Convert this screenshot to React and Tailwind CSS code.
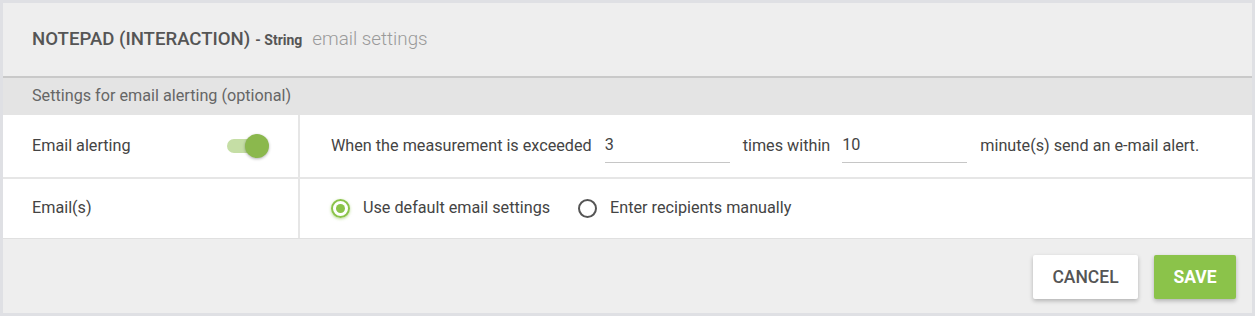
import React from "react";

export default function App() {
  return (
    <div
      className="w-[1255px] h-[316px] bg-[#dfe0e4] p-[3px]"
      style={{ fontFamily: "Roboto, 'Liberation Sans', sans-serif" }}
    >
      <div className="h-full bg-[#eeeeee] flex flex-col">
        {/* Header */}
        <div className="h-[75px] flex items-center pl-[29px] border-b-2 border-[#c9c9c9] shrink-0">
          <span className="text-[18.6px] font-medium text-[#555555]">NOTEPAD (INTERACTION)</span>
          <span className="text-[14px] font-bold text-[#555555] ml-[5px] mt-[2px]">- String</span>
          <span className="text-[18.8px] font-light text-[#9a9a9a] ml-[10px]">email settings</span>
        </div>
        {/* Section header */}
        <div className="h-[37px] flex items-center pl-[29px] bg-[#e4e4e4] shrink-0">
          <span className="text-[16.2px] text-[#666666]">Settings for email alerting (optional)</span>
        </div>
        {/* Rows */}
        <div className="bg-white shrink-0">
          <div className="flex h-[64px] border-b-2 border-[#e6e6e6]">
            <div className="w-[297px] flex items-center justify-between pl-[29px] pr-[33px] border-r-2 border-[#e6e6e6]">
              <span className="text-[16.2px] text-[#444444]">Email alerting</span>
              <div className="relative w-[38px] h-[14px] rounded-full bg-[#c5dea5]">
                <div className="absolute right-[-4px] top-[-5px] w-[24px] h-[24px] rounded-full bg-[#8bb84d] shadow-[0_1px_3px_rgba(0,0,0,0.3)]" />
              </div>
            </div>
            <div className="flex-1 flex items-center pl-[31px] text-[16.2px] text-[#444444]">
              <span>When the measurement is exceeded</span>
              <div className="ml-[13px] w-[125px] h-[34px] border-b border-[#c6c6c6] flex items-center">
                <span>3</span>
              </div>
              <span className="ml-[13px]">times within</span>
              <div className="ml-[12px] w-[125px] h-[34px] border-b border-[#c6c6c6] flex items-center">
                <span>10</span>
              </div>
              <span className="ml-[13px]">minute(s) send an e-mail alert.</span>
            </div>
          </div>
          <div className="flex h-[60px] border-b border-[#e0e0e0]">
            <div className="w-[297px] flex items-center pl-[29px] border-r-2 border-[#e6e6e6]">
              <span className="text-[16.2px] text-[#444444]">Email(s)</span>
            </div>
            <div className="flex-1 flex items-center pl-[31px] text-[16.2px] text-[#444444]">
              <div className="w-[19px] h-[19px] rounded-full border-2 border-[#8bc34a] flex items-center justify-center shadow-[0_1px_3px_rgba(139,195,74,0.6)]">
                <div className="w-[9px] h-[9px] rounded-full bg-[#8bc34a]" />
              </div>
              <span className="ml-[13px]">Use default email settings</span>
              <div className="ml-[28px] w-[19px] h-[19px] rounded-full border-2 border-[#555555]" />
              <span className="ml-[13px]">Enter recipients manually</span>
            </div>
          </div>
        </div>
        {/* Footer */}
        <div className="flex-1 flex items-start justify-end pt-[16px] pr-[16px] gap-[16px]">
          <button className="h-[44px] w-[105px] bg-white rounded-[2px] shadow-[0_2px_4px_rgba(0,0,0,0.25)] text-[17.5px] font-medium text-[#555555]">
            CANCEL
          </button>
          <button className="h-[44px] w-[82px] bg-[#8bc34a] rounded-[2px] shadow-[0_2px_4px_rgba(0,0,0,0.25)] text-[17.5px] font-bold text-white">
            SAVE
          </button>
        </div>
      </div>
    </div>
  );
}
